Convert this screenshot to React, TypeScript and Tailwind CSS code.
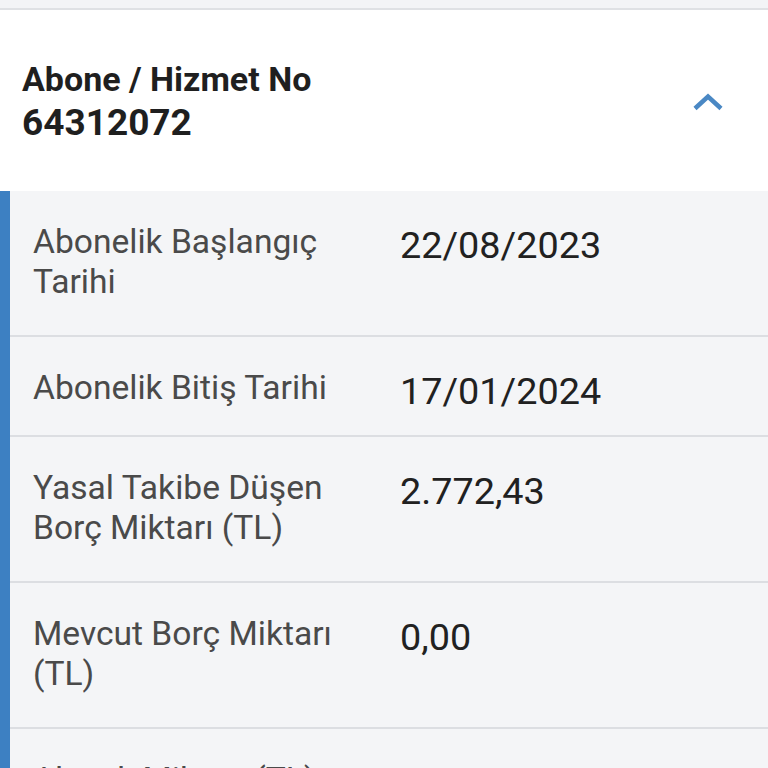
interface DetailRow {
  label: string
  value: string
  tall?: boolean
}

const ROWS: DetailRow[] = [
  { label: 'Abonelik Başlangıç Tarihi', value: '22/08/2023', tall: true },
  { label: 'Abonelik Bitiş Tarihi', value: '17/01/2024' },
  { label: 'Yasal Takibe Düşen Borç Miktarı (TL)', value: '2.772,43', tall: true },
  { label: 'Mevcut Borç Miktarı (TL)', value: '0,00', tall: true },
  { label: 'Alacak Miktarı (TL)', value: '0,00' },
]

function Row({ row }: { row: DetailRow }) {
  return (
    <div
      className={`flex items-start pl-[23px] pt-[31px] border-b-2 border-[#dcdee2] ${
        row.tall ? 'pb-[33px]' : 'pb-[24px]'
      }`}
    >
      <div className="w-[345px] mr-[22px] shrink-0 text-[33.6px] leading-[40px] text-[#4a4a4a]">
        {row.label}
      </div>
      <div className="pt-[3px] text-[37.8px] leading-[40px] text-[#212121]">{row.value}</div>
    </div>
  )
}

export default function App() {
  return (
    <div className="w-[768px] h-[768px] overflow-hidden bg-white font-['Roboto',sans-serif]">
      {/* previous card edge */}
      <div className="h-[10px] bg-[#f3f4f6] border-b-2 border-[#dfe1e4]" />

      {/* Header */}
      <div className="h-[181px] flex items-center justify-between pl-[22px] pr-[45px]">
        <div className="font-bold text-[#1f1f1f]">
          <div className="text-[34px] leading-[43px]">Abone / Hizmet No</div>
          <div className="text-[37px] leading-[43px]">64312072</div>
        </div>
        <svg width="30" height="18" viewBox="0 0 30 18" fill="none" className="mt-[2px]">
          <polyline points="2,15.5 15,3.5 28,15.5" stroke="#4a88c4" strokeWidth="4.5" strokeLinecap="butt" strokeLinejoin="miter" />
        </svg>
      </div>

      {/* Details */}
      <div className="border-l-[10px] border-[#3d80c2] bg-[#f4f5f7]">
        {ROWS.map(r => (
          <Row key={r.label} row={r} />
        ))}
      </div>
    </div>
  )
}
